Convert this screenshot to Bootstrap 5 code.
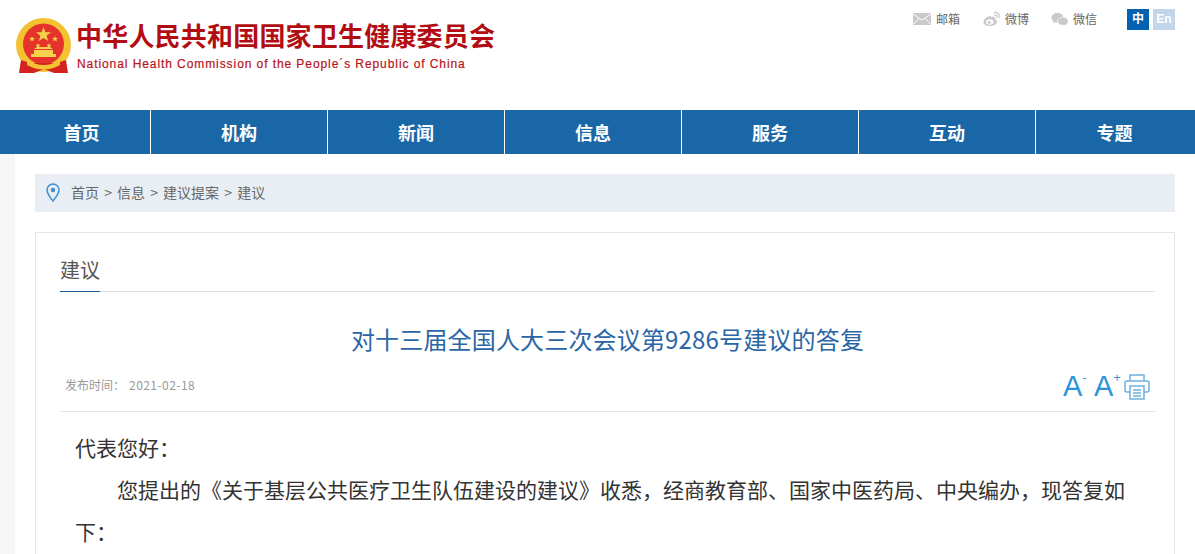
<!DOCTYPE html>
<html lang="zh-CN">

<head>
    <meta charset="UTF-8">
    <meta name="viewport" content="width=device-width, initial-scale=1">
    <title>对十三届全国人大三次会议第9286号建议的答复</title>
    <link href="https://cdn.jsdelivr.net/npm/bootstrap@5.3.0/dist/css/bootstrap.min.css" rel="stylesheet">
    <style>
        html,
        body {
            height: 100%;
            overflow: hidden;
        }

        body {
            background: #fff;
            color: #333;
            font-family: "Liberation Sans", "Noto Sans CJK SC", sans-serif;
        }

        .site-top {
            height: 110px;
            padding: 16px 20px 0 14px;
        }

        .emblem {
            width: 60px;
            height: 60px;
        }

        .site-name {
            margin-left: 2px;
        }

        .site-name-cn {
            font-size: 26px;
            line-height: 38px;
            font-weight: 700;
            letter-spacing: .2px;
            color: #b30d14;
            font-family: "Noto Sans CJK SC", sans-serif;
            white-space: nowrap;
        }

        .site-name-en {
            font-size: 12px;
            line-height: 18px;
            margin-top: 1px;
            margin-left: 1px;
            letter-spacing: .92px;
            color: #b8131a;
            -webkit-text-stroke: .2px #b8131a;
            white-space: nowrap;
        }

        .top-links {
            margin-top: -8px;
        }

        .top-link {
            font-size: 12px;
            line-height: 22px;
            color: #666;
            font-family: "Noto Sans CJK SC", sans-serif;
            text-decoration: none;
        }

        .top-link+.top-link {
            margin-left: 23px;
        }

        .top-link:nth-child(3) {
            margin-left: 22px;
        }

        .top-link svg {
            width: 18px;
            height: 16px;
            margin-right: 4px;
        }

        .top-link:first-child svg {
            margin-right: 5px;
        }

        .lang-group {
            margin-left: 30px;
        }

        .lang-btn {
            width: 22px;
            height: 21px;
            font-size: 12px;
            font-weight: 700;
            line-height: 21px;
            text-align: center;
            color: #fff;
            background: #0461b1;
            text-decoration: none;
        }

        .lang-en {
            background: #c1d6e8;
        }

        .main-nav {
            height: 44px;
            background: #1a67a8;
            padding-left: 15px;
        }

        .main-nav a {
            width: 177px;
            line-height: 44px;
            font-size: 18px;
            font-weight: 700;
            color: #fff;
            text-align: center;
            text-decoration: none;
            border-right: 1px solid #fff;
            font-family: "Noto Sans CJK SC", sans-serif;
        }

        .main-nav a:first-child {
            width: 136px;
            padding-right: 2px;
        }

        .main-nav a:last-child {
            width: 159px;
            padding-right: 2px;
            border-right: 0;
        }

        .page-wrap {
            margin-left: 15px;
            padding: 20px 20px 0;
            background: #fff;
        }

        .side-tint {
            background: #f6f6f6;
        }

        .crumbs {
            height: 38px;
            background: #e9eef5;
            padding: 0 0 2px 11px;
            font-size: 14px;
            word-spacing: 2px;
            color: #666;
            font-family: "Noto Sans CJK SC", sans-serif;
        }

        .crumbs svg {
            width: 14px;
            height: 19px;
            margin-right: 11px;
        }

        .article-box {
            margin-top: 20px;
            height: 600px;
            border: 1px solid #e5e5e5;
            padding: 0 19px 0 24px;
        }

        .tab-row {
            height: 59px;
            border-bottom: 1px solid #e0e0e0;
        }

        .tab-name {
            display: inline-block;
            width: 40px;
            height: 59px;
            padding-top: 22px;
            font-size: 20px;
            line-height: 30px;
            color: #555;
            border-bottom: 1px solid #1a5a96;
            font-family: "Noto Sans CJK SC", sans-serif;
        }

        .article-title {
            margin: 28px 0 0;
            font-size: 24px;
            line-height: 38px;
            font-weight: 400;
            letter-spacing: .17px;
            text-align: center;
            color: #2a66a6;
            font-family: "Noto Sans CJK SC", sans-serif;
        }

        .meta-row {
            height: 52px;
            margin-top: 2px;
            padding: 0 5px;
            border-bottom: 1px solid #e5e5e5;
        }

        .meta-date {
            font-size: 12px;
            color: #999;
            font-family: "Noto Sans CJK SC", sans-serif;
            padding-top: 16px;
        }

        .meta-date span {
            margin-left: 4px;
            letter-spacing: .45px;
        }

        .font-tools {
            color: #2a94d8;
            padding-top: 12px;
        }

        .font-btn {
            width: 31px;
            font-size: 29px;
            line-height: 30px;
            position: relative;
            margin-top: -1px;
        }

        .font-btn sup {
            position: absolute;
            top: 1px;
            left: 19.5px;
            font-size: 12px;
            line-height: 1;
        }

        .print-icon {
            width: 26px;
            height: 27px;
            margin: 1px 0 0 -1px;
        }

        .article-body {
            padding: 14px 20px 0 15px;
            font-size: 21px;
            line-height: 42px;
            color: #333;
            font-family: "Noto Sans CJK SC", sans-serif;
        }

        .article-body p {
            margin: 0;
        }

        .article-body .indent {
            text-indent: 2em;
        }
    </style>
</head>

<body>

    <!-- Header -->
    <header class="site-top d-flex justify-content-between align-items-start">
        <a class="d-flex align-items-start text-decoration-none" href="#">
            <svg class="emblem" viewBox="0 0 60 60" aria-hidden="true">
                <ellipse cx="29.5" cy="29" rx="27.5" ry="27" fill="#f2c230" />
                <circle cx="29.5" cy="28" r="20.5" fill="#e5322b" />
                <path d="M7 44 L16 47 L43 47 L52 44 L54 57 L40 57 L30 53 L20 57 L5 57 Z" fill="#d3231f" />
                <path d="M13 44 Q30 54 46 44 L46 49 Q30 58 13 49 Z" fill="#f2c230" />
                <path d="M17 38h25v3H17zM20 34h19v4H20zM23 31l-3 2h19l-3-2z" fill="#f6d24c" />
                <path d="M29.5 11l1.9 5.2 5.6.1-4.400 3.400 1.600 5.300-4.700-3.100-4.700 3.100 1.600-5.300-4.400-3.400 5.600-.1z" fill="#f6d24c" />
                <path d="M18 20l.8 2 2.200.1-1.700 1.300.6 2.100-1.900-1.200-1.800 1.200.6-2.100-1.700-1.300 2.100-.1zM41 20l.8 2 2.200.1-1.700 1.300.6 2.100-1.900-1.200-1.800 1.200.6-2.100-1.700-1.300 2.100-.1zM24 27l.7 1.700 1.900.1-1.500 1.100.5 1.800-1.600-1-1.600 1 .5-1.800-1.500-1.100 1.900-.1zM35 27l.7 1.700 1.900.1-1.500 1.100.5 1.800-1.600-1-1.600 1 .5-1.800-1.500-1.100 1.900-.1z" fill="#f6d24c" />
            </svg>
            <div class="site-name">
                <div class="site-name-cn">中华人民共和国国家卫生健康委员会</div>
                <div class="site-name-en">National Health Commission of the People´s Republic of China</div>
            </div>
        </a>

        <div class="top-links d-flex align-items-center">
            <a class="top-link d-flex align-items-center" href="#">
                <svg viewBox="0 0 18 16" aria-hidden="true">
                    <path d="M0 2h18v12H0z" fill="#c9c9c9" />
                    <path d="M0 3l9 6 9-6M0 13.500l6-6M18 13.500l-6-6" fill="none" stroke="#fff" stroke-width="1" />
                </svg>
                邮箱
            </a>
            <a class="top-link d-flex align-items-center" href="#">
                <svg viewBox="0 0 18 16" aria-hidden="true">
                    <path d="M7.500 5C3.500 5.500 .5 8.500.5 11c0 2.500 3 4 6.500 4 4 0 7-2 7-4.500 0-1.500-1.500-2-2-2.200.5-1.500 0-2.500-1.500-2.500-1 0-2 .5-2.500.7 .3-1 0-1.700-.5-1.500z" fill="#c9c9c9" />
                    <ellipse cx="6.800" cy="11" rx="3.800" ry="2.700" fill="#fff" />
                    <circle cx="6.300" cy="11.200" r="1.500" fill="#c9c9c9" />
                    <path d="M11.500 1.500c3-.6 5.500 2 4.800 5M11.800 4c1.500-.3 2.500 1 2.200 2.300" fill="none" stroke="#c9c9c9" stroke-width="1.300" stroke-linecap="round" />
                </svg>
                微博
            </a>
            <a class="top-link d-flex align-items-center" href="#">
                <svg viewBox="0 0 18 16" aria-hidden="true">
                    <path d="M6.500 2C3 2 .5 4.100.5 6.800c0 1.500.8 2.800 2 3.700L2 12.300l2.200-1.100c.8.200 1.500.3 2.300.3 3.500 0 6-2.100 6-4.700S10 2 6.500 2z" fill="#c9c9c9" />
                    <path d="M12 6.200c-3 0-5.500 1.800-5.500 4.100s2.500 4.100 5.500 4.100c.6 0 1.200-.1 1.800-.3l1.800 1-.4-1.600c1.200-.8 2.100-1.900 2.100-3.200 0-2.300-2.300-4.100-5.300-4.100z" fill="#c9c9c9" stroke="#fff" stroke-width=".7" />
                </svg>
                微信
            </a>
            <div class="lang-group d-flex gap-1">
                <a class="lang-btn" href="#">中</a>
                <a class="lang-btn lang-en" href="#">En</a>
            </div>
        </div>
    </header>

    <!-- Main nav -->
    <nav class="main-nav d-flex">
        <a href="#">首页</a>
        <a href="#">机构</a>
        <a href="#">新闻</a>
        <a href="#">信息</a>
        <a href="#">服务</a>
        <a href="#">互动</a>
        <a href="#">专题</a>
    </nav>

    <div class="side-tint">
        <main class="page-wrap">
            <!-- Breadcrumb -->
            <div class="crumbs d-flex align-items-center">
                <svg viewBox="0 0 14 19" aria-hidden="true">
                    <path d="M7 18C4.500 14.500 1 11 1 7a6 6 0 0 1 12 0c0 4-3.500 7.500-6 11z" fill="none" stroke="#3c8ed6" stroke-width="1.500" />
                    <circle cx="7" cy="7" r="2.200" fill="#3c8ed6" />
                </svg>
                <span>首页 &gt; 信息 &gt; 建议提案 &gt; 建议</span>
            </div>

            <!-- Article -->
            <section class="article-box">
                <div class="tab-row"><span class="tab-name">建议</span></div>
                <h1 class="article-title">对十三届全国人大三次会议第9286号建议的答复</h1>
                <div class="meta-row d-flex justify-content-between">
                    <div class="meta-date">发布时间：<span>2021-02-18</span></div>
                    <div class="font-tools d-flex align-items-start">
                        <span class="font-btn">A<sup>-</sup></span>
                        <span class="font-btn">A<sup>+</sup></span>
                        <svg class="print-icon" viewBox="0 0 26 27" fill="none" stroke="#6fb0de" stroke-width="1.500" aria-hidden="true">
                            <path d="M6 8V2h14v6M6 19H3a2 2 0 0 1-2-2v-7a2 2 0 0 1 2-2h20a2 2 0 0 1 2 2v7a2 2 0 0 1-2 2h-3" />
                            <path d="M6 13h14v13H6z" />
                            <path d="M9 17h8M9 20h8M9 23h8" />
                        </svg>
                    </div>
                </div>
                <div class="article-body">
                    <p>代表您好：</p>
                    <p class="indent">您提出的《关于基层公共医疗卫生队伍建设的建议》收悉，经商教育部、国家中医药局、中央编办，现答复如下：</p>
                </div>
            </section>
        </main>
    </div>

</body>

</html>
